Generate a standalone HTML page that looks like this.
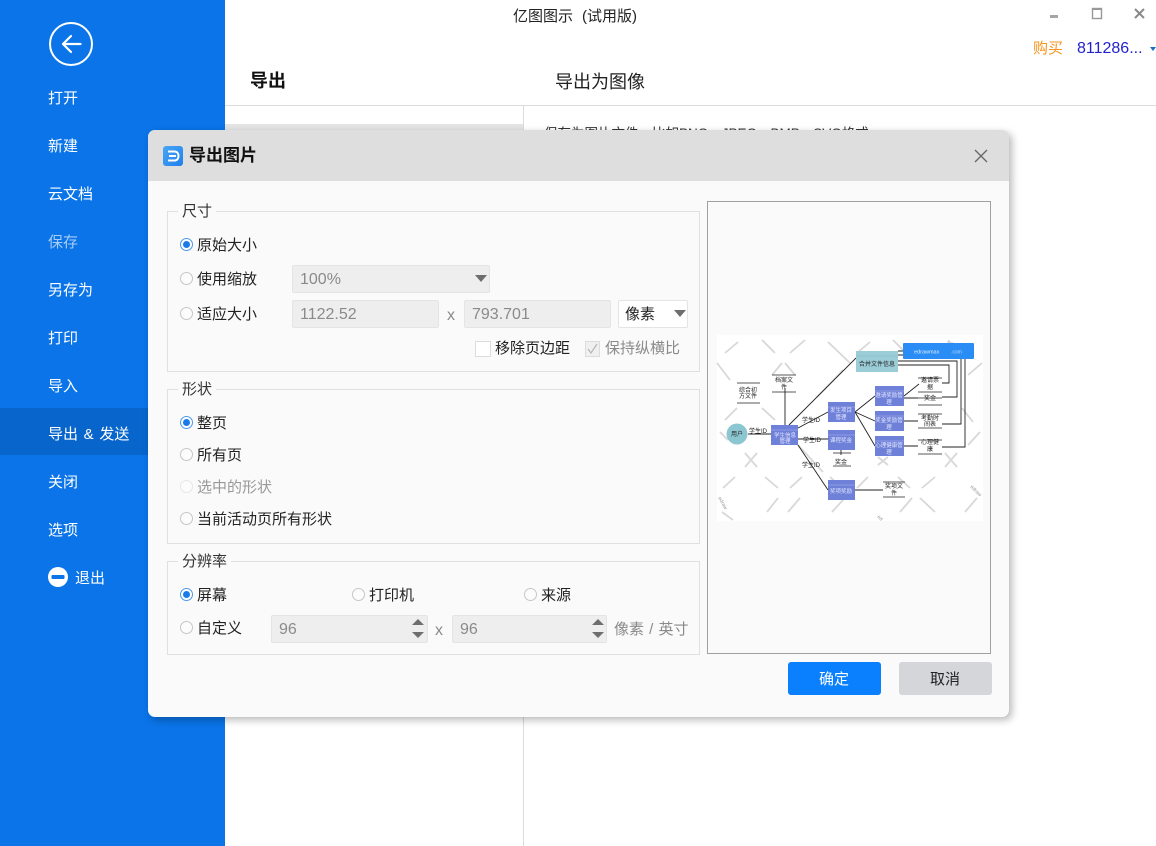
<!DOCTYPE html>
<html lang="zh">
<head>
<meta charset="utf-8">
<style>
html,body{margin:0;padding:0;width:1156px;height:846px;overflow:hidden;background:#fff}
body{position:relative;font-family:"Liberation Sans","Noto Sans CJK SC",sans-serif;font-size:15px;color:#222}
.a{position:absolute;white-space:nowrap;line-height:22px}
.nav{position:absolute;left:48px;color:#fff;font-size:15px;line-height:22px;white-space:nowrap}
.fs{position:absolute;left:167px;width:531px;border:1px solid #e0e0e0;box-sizing:content-box}
.lg{position:absolute;left:178px;background:#fafafa;padding:0 4px;line-height:22px;color:#333}
.r{position:absolute;width:11px;height:11px;border:1px solid #c6c6c6;border-radius:50%;background:#fcfcfc}
.r.on{border-color:#4c98ec;background:#fff}
.r.on:after{content:"";position:absolute;left:2px;top:2px;width:7px;height:7px;border-radius:50%;background:#1a7be8}
.r.dis{border-color:#e6e6e6}
.inp{position:absolute;height:28px;background:#eeeeee;border:1px solid #e4e4e4;box-sizing:border-box;border-radius:2px;color:#8a8a8a;line-height:28px;padding-left:7px;font-size:16px}
.tri{position:absolute;width:0;height:0;border-left:6px solid transparent;border-right:6px solid transparent;border-top:7px solid #6e6e6e}
.up{position:absolute;width:0;height:0;border-left:6px solid transparent;border-right:6px solid transparent;border-bottom:6px solid #6e6e6e}
.dn{position:absolute;width:0;height:0;border-left:6px solid transparent;border-right:6px solid transparent;border-top:6px solid #6e6e6e}
.g{color:#8a8a8a}
</style>
</head>
<body>
<!-- sidebar -->
<div style="position:absolute;left:0;top:0;width:225px;height:846px;background:#0a74e8"></div>
<div style="position:absolute;left:0;top:408px;width:225px;height:47px;background:#0765cc"></div>
<svg style="position:absolute;left:48px;top:21px" width="46" height="46" viewBox="0 0 46 46">
<circle cx="23" cy="23" r="21" fill="none" stroke="#fff" stroke-width="2"/>
<path d="M32.500 23H15M23 15L15 23L23 31" fill="none" stroke="#fff" stroke-width="2.200" stroke-linecap="round" stroke-linejoin="round"/>
</svg>
<div class="nav" style="top:88px">打开</div>
<div class="nav" style="top:136px">新建</div>
<div class="nav" style="top:184px">云文档</div>
<div class="nav" style="top:232px;color:#a9cdf5">保存</div>
<div class="nav" style="top:280px">另存为</div>
<div class="nav" style="top:328px">打印</div>
<div class="nav" style="top:376px">导入</div>
<div class="nav" style="top:424px;word-spacing:1.500px">导出 &amp; 发送</div>
<div class="nav" style="top:472px">关闭</div>
<div class="nav" style="top:520px">选项</div>
<svg style="position:absolute;left:48px;top:567px" width="20" height="20"><circle cx="10" cy="10" r="10" fill="#fff"/><rect x="3.500" y="8" width="13" height="4" rx="1" fill="#0a74e8"/></svg>
<div class="nav" style="left:75px;top:568px">退出</div>

<!-- top -->
<div class="a" style="left:513px;top:6px">亿图图示</div>
<div class="a" style="left:582px;top:6px">(试用版)</div>
<svg style="position:absolute;left:1045px;top:5px" width="105" height="20" viewBox="0 0 105 20">
<rect x="5" y="10" width="8" height="3" fill="#a5a5a5"/>
<rect x="47.500" y="3.500" width="9" height="10" fill="none" stroke="#999" stroke-width="1.400"/>
<rect x="47" y="3" width="10" height="2" fill="#999"/>
<path d="M90 4L99 13M99 4L90 13" stroke="#888" stroke-width="2"/>
</svg>
<div class="a" style="left:1033px;top:38px;color:#f7941d">购买</div>
<div class="a" style="left:1077px;top:38px;color:#2222cc;font-size:16px">811286...</div>
<div style="position:absolute;left:1150px;top:47px;width:0;height:0;border-left:3px solid transparent;border-right:3px solid transparent;border-top:4px solid #1a6fc9"></div>

<div class="a" style="left:250px;top:70px;font-size:18px;font-weight:bold;color:#111;line-height:22px">导出</div>
<div class="a" style="left:555px;top:70px;font-size:18px;color:#222;line-height:24px">导出为图像</div>
<div style="position:absolute;left:225px;top:105px;width:931px;height:1px;background:#dcdcdc"></div>
<div style="position:absolute;left:523px;top:105px;width:1px;height:741px;background:#dcdcdc"></div>
<div style="position:absolute;left:225px;top:124px;width:298px;height:30px;background:#e4e4e4"></div>
<div class="a" style="left:544px;top:123px;font-size:13.500px;color:#333">保存为图片文件，比如PNG、JPEG、BMP、SVG格式。</div>

<!-- dialog -->
<div style="position:absolute;left:148px;top:130px;width:861px;height:587px;background:#fafafa;border-radius:7px;box-shadow:3px 3px 8px rgba(0,0,0,.28);overflow:hidden">
  <div style="position:absolute;left:0;top:0;width:861px;height:51px;background:#dedede"></div>
</div>
<svg style="position:absolute;left:163px;top:146px" width="20" height="20" viewBox="0 0 20 20">
<defs><linearGradient id="lg1" x1="0" y1="0" x2="1" y2="1"><stop offset="0" stop-color="#4aa6f5"/><stop offset="1" stop-color="#1f7fee"/></linearGradient></defs>
<rect width="20" height="20" rx="3" fill="url(#lg1)"/>
<path d="M5 5.500H11.500C14 5.500 15.500 7.500 15.500 10C15.500 12.500 14 14.500 11.500 14.500H5M6 10H13" fill="none" stroke="#fff" stroke-width="2"/>
</svg>
<div class="a" style="left:189px;top:145px;font-size:17px;font-weight:bold;color:#111;line-height:22px">导出图片</div>
<svg style="position:absolute;left:973px;top:148px" width="16" height="16"><path d="M2 2L14 14M14 2L2 14" stroke="#666" stroke-width="1.300"/></svg>

<!-- 尺寸 -->
<div class="fs" style="top:211px;height:159px"></div>
<div class="lg" style="top:201px">尺寸</div>
<div class="r on" style="left:180px;top:238px"></div><div class="a" style="left:197px;top:235px">原始大小</div>
<div class="r" style="left:180px;top:272px"></div><div class="a" style="left:197px;top:269px">使用缩放</div>
<div class="inp" style="left:292px;top:265px;width:198px">100%</div><div class="tri" style="left:475px;top:275px"></div>
<div class="r" style="left:180px;top:307px"></div><div class="a" style="left:197px;top:304px">适应大小</div>
<div class="inp" style="left:292px;top:300px;width:147px">1122.52</div>
<div class="a g" style="left:447px;top:305px;font-size:16px">x</div>
<div class="inp" style="left:464px;top:300px;width:147px">793.701</div>
<div class="inp" style="left:618px;top:300px;width:70px;background:#fff;color:#222;padding-left:6px;font-size:15px">像素</div><div class="tri" style="left:674px;top:310px"></div>
<div style="position:absolute;left:475px;top:341px;width:16px;height:16px;background:#fff;border:1px solid #dcdcdc;box-sizing:border-box"></div>
<div class="a" style="left:495px;top:338px">移除页边距</div>
<svg style="position:absolute;left:585px;top:341px" width="16" height="16"><rect x=".5" y=".5" width="14" height="15" fill="#f0f0f0" stroke="#dcdcdc"/><path d="M3 8L6 12L12 3" fill="none" stroke="#b5b5b5" stroke-width="1.200"/></svg>
<div class="a g" style="left:605px;top:338px">保持纵横比</div>

<!-- 形状 -->
<div class="fs" style="top:389px;height:153px"></div>
<div class="lg" style="top:379px">形状</div>
<div class="r on" style="left:180px;top:416px"></div><div class="a" style="left:197px;top:413px">整页</div>
<div class="r" style="left:180px;top:448px"></div><div class="a" style="left:197px;top:445px">所有页</div>
<div class="r dis" style="left:180px;top:480px"></div><div class="a" style="left:197px;top:477px;color:#999">选中的形状</div>
<div class="r" style="left:180px;top:512px"></div><div class="a" style="left:197px;top:509px">当前活动页所有形状</div>

<!-- 分辨率 -->
<div class="fs" style="top:561px;height:92px"></div>
<div class="lg" style="top:551px">分辨率</div>
<div class="r on" style="left:180px;top:588px"></div><div class="a" style="left:197px;top:585px">屏幕</div>
<div class="r" style="left:352px;top:588px"></div><div class="a" style="left:369px;top:585px">打印机</div>
<div class="r" style="left:524px;top:588px"></div><div class="a" style="left:541px;top:585px">来源</div>
<div class="r" style="left:180px;top:621px"></div><div class="a" style="left:197px;top:618px">自定义</div>
<div class="inp" style="left:271px;top:615px;width:157px">96</div>
<div class="up" style="left:412px;top:619px"></div><div class="dn" style="left:412px;top:632px"></div>
<div class="a g" style="left:435px;top:620px;font-size:16px">x</div>
<div class="inp" style="left:452px;top:615px;width:155px">96</div>
<div class="up" style="left:592px;top:619px"></div><div class="dn" style="left:592px;top:632px"></div>
<div class="a g" style="left:614px;top:619px;word-spacing:1px">像素 / 英寸</div>

<!-- preview -->
<div style="position:absolute;left:707px;top:201px;width:284px;height:453px;border:1px solid #a0a0a0;box-sizing:border-box;background:#fafafa"></div>
<svg style="position:absolute;left:0;top:0" width="1156" height="846" viewBox="0 0 1156 846" font-family="'Liberation Sans','Noto Sans CJK SC',sans-serif">
<rect x="717" y="335" width="266" height="186" fill="#fff"/>
<g stroke="#d8d8d8" stroke-width="1.800" fill="none">
<path d="M725 353L738 342M762 340L775 353M790 353L805 340M828 342L850 363M857 353L870 342M893 340L905 352"/>
<path d="M717 363L730 380M772 375L782 363M785 363L795 375M817 397L843 370M968 375L982 363"/>
<path d="M725 420L737 408M762 408L775 420M962 408L973 422M720 432L728 440"/>
<path d="M745 453L757 467M757 453L745 467M878 457L888 465M888 457L878 465M945 453L957 467M957 453L945 467M968 445L980 432"/>
<path d="M723 488L735 477M765 477L778 488M790 488L802 477M830 477L842 488M857 488L868 477M898 477L910 488M922 488L935 477"/>
<path d="M722 512L733 520M767 512L778 498M788 512L800 498M832 512L843 500M900 512L912 498M920 498L935 512M965 512L977 498M798 445L823 472"/>
</g>
<g fill="#9a9a9a" font-size="5"><text x="947" y="342" transform="rotate(40 947 342)">edraw</text><text x="970" y="487" transform="rotate(45 970 487)">edraw</text><text x="718" y="498" transform="rotate(60 718 498)">edraw</text><text x="877" y="517" transform="rotate(45 877 517)">ed</text></g>
<!-- connectors -->
<g stroke="#222" stroke-width=".9" fill="none">
<path d="M748 434H771M785 388V425M789 425L856 358M798 439H828M798 428L828 412M798 445L828 490M855 412L875 396M855 412L875 421M855 412L875 446"/>
<path d="M904 396L919 384M904 398H918M904 421H918M904 446H918M855 490H883M841 450V455"/>
<path d="M898 351H965V447H942M898 355H961V424H942M898 361H957V397H942M898 365H949V383H942"/>
</g>
<!-- stores -->
<g stroke="#222" stroke-width=".8"><path d="M737 383H760M737 403H760M772 375H796M772 392H796M833 453H851M833 466H851M918 378H942M918 392H942M918 398H942M918 405H942M918 414H942M918 428H942M918 440H942M918 454H942M883 482H905M883 497H905"/></g>
<rect x="771" y="425" width="27" height="20" fill="#6f80d9"/><rect x="828" y="402" width="27" height="20" fill="#6f80d9"/><rect x="828" y="430" width="27" height="20" fill="#6f80d9"/><rect x="828" y="480" width="27" height="20" fill="#6f80d9"/>
<rect x="875" y="386" width="29" height="20" fill="#6f80d9"/><rect x="875" y="411" width="29" height="20" fill="#6f80d9"/><rect x="875" y="436" width="29" height="20" fill="#6f80d9"/>
<g stroke="#aab4ee" stroke-width=".6"><path d="M771 430H798M828 407H855M828 435H855M828 485H855M875 391H904M875 416H904M875 441H904"/></g>
<rect x="856" y="351" width="42" height="21" fill="#9bcdd8"/><path d="M856 356H898" stroke="#86bcc8" stroke-width=".6"/>
<rect x="903" y="343" width="71" height="16" rx="1" fill="#2a8df6"/>
<circle cx="737" cy="434" r="10.500" fill="#8cc7d1"/>
<g font-size="6" fill="#222" text-anchor="middle">
<text x="737" y="436">用户</text><text x="758" y="433">学生ID</text><text x="811" y="422">学生ID</text><text x="812" y="442">学生ID</text><text x="811" y="467">学生ID</text>
<text x="748" y="392">综合初</text><text x="748" y="398">方文件</text><text x="784" y="382">档案文</text><text x="784" y="389">件</text>
<text x="877" y="366">合并文件信息</text><text x="930" y="382">邀请票</text><text x="930" y="389">据</text><text x="930" y="400">奖金</text>
<text x="930" y="420">考勤时</text><text x="930" y="426">间表</text><text x="930" y="444">心理健</text><text x="930" y="451">康</text><text x="841" y="464">奖金</text><text x="894" y="488">奖项文</text><text x="894" y="495">件</text>
</g>
<g font-size="5.500" fill="#e4e8ff" text-anchor="middle">
<text x="785" y="437">学生信息</text><text x="785" y="443">管理</text><text x="841" y="412">发生项目</text><text x="841" y="419">管理</text><text x="841" y="442">课程奖金</text><text x="841" y="493">奖项奖励</text>
<text x="889" y="397">邀请奖励管</text><text x="889" y="404">理</text><text x="889" y="422">奖金奖励管</text><text x="889" y="429">理</text><text x="889" y="447">心理健康管</text><text x="889" y="454">理</text>
</g>
<text x="914" y="353.500" font-size="5.500" fill="#d9ecff">edrawmax</text><text x="951" y="353.500" font-size="5" fill="#b9dcff">.com</text>
</svg>

<!-- buttons -->
<div style="position:absolute;left:788px;top:662px;width:92px;padding-right:1px;height:33px;background:#0a80ff;border-radius:3px;color:#fff;text-align:center;line-height:36px">确定</div>
<div style="position:absolute;left:899px;top:662px;width:92px;padding-right:1px;height:33px;background:#d5d6da;border-radius:3px;color:#222;text-align:center;line-height:36px">取消</div>
</body>
</html>
